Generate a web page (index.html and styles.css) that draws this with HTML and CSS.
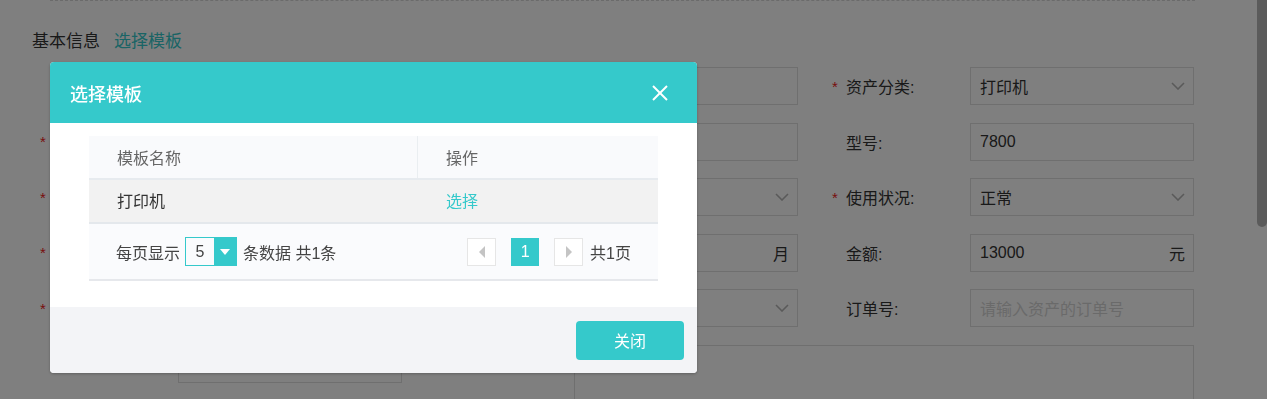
FILE: index.html
```html
<!DOCTYPE html>
<html lang="zh-CN">
<head>
    <meta charset="UTF-8">
    <meta name="viewport" content="width=device-width, initial-scale=1.0">
    <title>资产登记</title>
    <link rel="stylesheet" href="styles.css">
</head>
<body>

<div class="page">
    <div class="divider"></div>

    <div class="section-title">
        <span>基本信息</span>
        <a class="link">选择模板</a>
    </div>

    <div class="form-grid">
        <!-- row 1 -->
        <div class="field">
            <label class="field-label"><span class="star"></span></label>
            <div class="field-input"></div>
        </div>
        <div class="field">
            <label class="field-label"><span class="star"></span></label>
            <div class="field-input"></div>
        </div>
        <div class="field">
            <label class="field-label"><span class="star">*</span>资产分类:</label>
            <div class="field-input">打印机<svg class="chevron" width="14" height="8" viewBox="0 0 14 8"><polyline points="1,1 7,7 13,1"/></svg></div>
        </div>

        <!-- row 2 -->
        <div class="field">
            <label class="field-label"><span class="star">*</span></label>
            <div class="field-input"></div>
        </div>
        <div class="field">
            <label class="field-label"><span class="star"></span></label>
            <div class="field-input"></div>
        </div>
        <div class="field">
            <label class="field-label"><span class="star"></span>型号:</label>
            <div class="field-input">7800</div>
        </div>

        <!-- row 3 -->
        <div class="field">
            <label class="field-label"><span class="star">*</span></label>
            <div class="field-input"></div>
        </div>
        <div class="field">
            <label class="field-label"><span class="star"></span></label>
            <div class="field-input"><span></span><svg class="chevron" width="14" height="8" viewBox="0 0 14 8"><polyline points="1,1 7,7 13,1"/></svg></div>
        </div>
        <div class="field">
            <label class="field-label"><span class="star">*</span>使用状况:</label>
            <div class="field-input">正常<svg class="chevron" width="14" height="8" viewBox="0 0 14 8"><polyline points="1,1 7,7 13,1"/></svg></div>
        </div>

        <!-- row 4 -->
        <div class="field">
            <label class="field-label"><span class="star">*</span></label>
            <div class="field-input"></div>
        </div>
        <div class="field">
            <label class="field-label"><span class="star"></span></label>
            <div class="field-input"><span></span><span class="suffix">月</span></div>
        </div>
        <div class="field">
            <label class="field-label"><span class="star"></span>金额:</label>
            <div class="field-input">13000<span class="suffix">元</span></div>
        </div>

        <!-- row 5 -->
        <div class="field">
            <label class="field-label"><span class="star">*</span></label>
            <div class="field-input"></div>
        </div>
        <div class="field">
            <label class="field-label"><span class="star"></span></label>
            <div class="field-input"><span></span><svg class="chevron" width="14" height="8" viewBox="0 0 14 8"><polyline points="1,1 7,7 13,1"/></svg></div>
        </div>
        <div class="field">
            <label class="field-label"><span class="star"></span>订单号:</label>
            <div class="field-input placeholder">请输入资产的订单号</div>
        </div>

        <!-- row 6 -->
        <div class="field">
            <label class="field-label"><span class="star"></span></label>
            <div class="field-input"></div>
        </div>
        <div class="field field-wide">
            <label class="field-label"><span class="star"></span></label>
            <div class="field-textarea"></div>
        </div>
    </div>
</div>

<div class="scroll-thumb"></div>

<div class="mask">
    <div class="modal">
        <div class="modal-header">
            <span class="modal-title">选择模板</span>
            <span class="modal-close">
                <svg width="16" height="16" viewBox="0 0 16 16"><line x1="1" y1="1" x2="15" y2="15"/><line x1="15" y1="1" x2="1" y2="15"/></svg>
            </span>
        </div>

        <div class="modal-body">
            <div class="tpl-row tpl-head">
                <div class="tpl-cell">模板名称</div>
                <div class="tpl-cell">操作</div>
            </div>
            <div class="tpl-row tpl-item">
                <div class="tpl-cell">打印机</div>
                <div class="tpl-cell"><a class="link">选择</a></div>
            </div>

            <div class="pager">
                <div class="pager-left">
                    <span>每页显示</span>
                    <div class="size-select">
                        <span class="size-value">5</span>
                        <span class="size-caret"></span>
                    </div>
                    <span class="pager-info">条数据 共1条</span>
                </div>
                <div class="pager-right">
                    <span class="pg-btn"><span class="tri-left"></span></span>
                    <span class="pg-num">1</span>
                    <span class="pg-btn"><span class="tri-right"></span></span>
                    <span class="pager-total">共1页</span>
                </div>
            </div>
        </div>

        <div class="modal-footer">
            <button class="btn-primary">关闭</button>
        </div>
    </div>
</div>

</body>
</html>
```

FILE: styles.css
```css
body {
    margin: 0;
    font-family: "Liberation Sans", "Noto Sans CJK SC", sans-serif;
    font-size: 16px;
    color: #333;
    background-color: #fff;
    overflow: hidden;
}
.page {
    width: 1257px;
    padding-left: 32px;
    box-sizing: border-box;
}
.divider {
    margin-left: 18px;
    width: 1145px;
    border-top: 1px dashed #d6d6d6;
}
.section-title {
    margin-top: 29px;
    display: flex;
    gap: 14px;
    font-size: 17px;
    line-height: 24px;
}
.link {
    color: #35c9cb;
    cursor: pointer;
}
.form-grid {
    margin: 13px 0 0 8px;
    display: grid;
    grid-template-columns: repeat(3, 362px);
    column-gap: 34px;
    row-gap: 17.5px;
    align-items: start;
}
.field {
    display: flex;
    align-items: center;
}
.field-label {
    width: 138px;
    flex: none;
    display: flex;
    align-items: center;
}
.star {
    width: 14px;
    flex: none;
    color: #f02020;
    font-size: 15px;
    line-height: 1;
}
.field-input {
    width: 224px;
    height: 38px;
    box-sizing: border-box;
    border: 1px solid #dedede;
    padding: 0 8px 0 9px;
    display: flex;
    align-items: center;
    justify-content: space-between;
}
.placeholder {
    color: #d4d4d4;
}
.chevron {
    fill: none;
    stroke: #b5b5b5;
    stroke-width: 1.6;
}
.field-wide {
    grid-column: 2 / 4;
    align-items: flex-start;
}
.field-wide .field-label {
    height: 38px;
}
.field-textarea {
    width: 621px;
    height: 90px;
    box-sizing: border-box;
    border: 1px solid #dedede;
}
.scroll-thumb {
    position: fixed;
    top: 0;
    right: 0;
    width: 10px;
    height: 227px;
    background-color: #b6b6b6;
    border-radius: 0 0 5px 5px;
}

/* modal */
.mask {
    position: fixed;
    inset: 0;
    background-color: rgba(0, 0, 0, 0.5);
}
.modal {
    position: absolute;
    left: 50px;
    top: 62px;
    width: 647px;
    background-color: #fff;
    border-radius: 4px;
    overflow: hidden;
    box-shadow: 0 1px 3px rgba(0, 0, 0, 0.25);
}
.modal-header {
    height: 61px;
    background-color: #35c9cb;
    display: flex;
    align-items: center;
    justify-content: space-between;
    padding: 0 29px 0 20px;
}
.modal-title {
    color: #fff;
    font-size: 18px;
    font-weight: 500;
}
.modal-close {
    display: flex;
    cursor: pointer;
}
.modal-close svg line {
    stroke: #fff;
    stroke-width: 2;
}
.modal-body {
    padding: 13px 39px 26px;
}
.tpl-row {
    display: grid;
    grid-template-columns: 329px 1fr;
    height: 42px;
}
.tpl-cell {
    display: flex;
    align-items: center;
    padding-left: 28px;
    box-sizing: border-box;
}
.tpl-head {
    background-color: #f9fafc;
    border-bottom: 2px solid #e7ebef;
    color: #666;
}
.tpl-head .tpl-cell:first-child {
    border-right: 1px solid #eaeef1;
}
.tpl-item {
    background-color: #f2f2f2;
    border-bottom: 2px solid #e4e8ec;
}
.tpl-item .tpl-cell {
    padding-bottom: 2px;
}
.pager {
    height: 55px;
    background-color: #fafbfd;
    border-bottom: 2px solid #e6e8ec;
    padding: 0 27px;
    display: flex;
    align-items: center;
    justify-content: space-between;
    color: #444;
}
.pager-left, .pager-right {
    display: flex;
    align-items: center;
}
.size-select {
    margin: 0 6px 0 5px;
    width: 52px;
    height: 29px;
    box-sizing: border-box;
    border: 1px solid #35c9cb;
    display: flex;
}
.size-value {
    width: 28px;
    display: flex;
    align-items: center;
    justify-content: center;
}
.size-caret {
    flex: 1;
    background-color: #35c9cb;
    display: flex;
    align-items: center;
    justify-content: center;
}
.size-caret::after {
    content: "";
    border-left: 5px solid transparent;
    border-right: 5px solid transparent;
    border-top: 6px solid #fff;
}
.pg-btn {
    width: 29px;
    height: 28px;
    box-sizing: border-box;
    border: 1px solid #e6e6e6;
    background-color: #fff;
    display: flex;
    align-items: center;
    justify-content: center;
}
.tri-left {
    border-top: 6px solid transparent;
    border-bottom: 6px solid transparent;
    border-right: 6px solid #c4c4c4;
}
.tri-right {
    border-top: 6px solid transparent;
    border-bottom: 6px solid transparent;
    border-left: 6px solid #c4c4c4;
}
.pg-num {
    margin: 0 15px;
    width: 28px;
    height: 28px;
    background-color: #35c9cb;
    color: #fff;
    display: flex;
    align-items: center;
    justify-content: center;
}
.pager-total {
    margin-left: 7px;
}
.modal-footer {
    height: 66px;
    background-color: #f3f4f7;
    display: flex;
    align-items: center;
    justify-content: flex-end;
    padding-right: 13px;
}
.btn-primary {
    width: 108px;
    height: 39px;
    border: none;
    border-radius: 4px;
    background-color: #35c9cb;
    color: #fff;
    font-family: inherit;
    font-size: 16px;
    cursor: pointer;
}
```
